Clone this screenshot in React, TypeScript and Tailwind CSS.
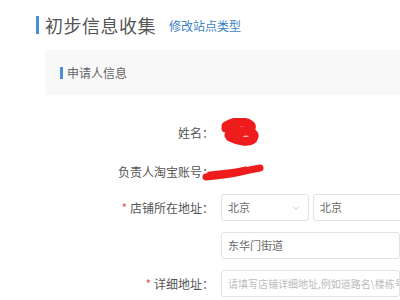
import React from "react";

const font = { fontFamily: '"Noto Sans CJK SC", "Noto Sans", sans-serif' };

function Chevron() {
  return (
    <svg width="8" height="6" viewBox="0 0 8 6" className="shrink-0">
      <path d="M1 1.5 L4 4.5 L7 1.5" fill="none" stroke="#c8c8c8" strokeWidth="1" />
    </svg>
  );
}

export default function App() {
  return (
    <div
      className="w-[400px] h-[300px] bg-white overflow-hidden relative"
      style={font}
    >
      {/* header */}
      <div className="flex items-center pl-[36px] pt-[15px] h-[35px]">
        <div className="w-[3px] h-[18px] bg-[#4a8fd6]" />
        <div className="ml-[6px] text-[18px] leading-[20px] text-[#555] tracking-[0.5px]">初步信息收集</div>
        <div className="ml-[13px] text-[12px] leading-[14px] text-[#3b7fc4] mt-[1px]">修改站点类型</div>
      </div>

      {/* section panel */}
      <div className="mt-[15px] ml-[45px] h-[45px] bg-[#f8f8f8] flex items-center pl-[15px]">
        <div className="w-[3px] h-[12px] bg-[#4a8fd6]" />
        <div className="ml-[4px] text-[12px] leading-[14px] text-[#666]">申请人信息</div>
      </div>

      {/* form */}
      <div className="mt-[28px] flex flex-col text-[12px] text-[#555]">
        <div className="flex items-center h-[20px] relative">
          <div className="w-[214px] text-right shrink-0">姓名：</div>
          <svg
            className="absolute left-[216px] top-[-5px]"
            width="46"
            height="28"
            viewBox="0 0 46 28"
          >
            <path
              d="M10 8 C16 4 24 3 31 5 C38 8 36 12 28 13 C36 13 40 16 37 21 C32 25 22 23 14 19"
              fill="none"
              stroke="#ee1c1c"
              strokeWidth="9"
              strokeLinecap="round"
              strokeLinejoin="round"
            />
            <path d="M9 11 C15 9 22 10 28 14 C24 17 18 18 12 17" fill="#ee1c1c" stroke="#ee1c1c" strokeWidth="7" strokeLinecap="round" strokeLinejoin="round" />
          </svg>
        </div>
        <div className="flex items-center h-[20px] mt-[19px] relative">
          <div className="w-[214px] text-right shrink-0">负责人淘宝账号：</div>
          <svg
            className="absolute left-[200px] top-[0px]"
            width="66"
            height="20"
            viewBox="0 0 66 20"
          >
            <path
              d="M6 15 C16 14 26 13 36 11 C46 9 53 7 60 6"
              fill="none"
              stroke="#ee1c1c"
              strokeWidth="7"
              strokeLinecap="round"
            />
            <path d="M10 13 C22 12 34 11 46 8" fill="none" stroke="#ee1c1c" strokeWidth="7" strokeLinecap="round" />
          </svg>
        </div>
        <div className="flex items-center h-[27px] mt-[12px]">
          <div className="w-[214px] text-right shrink-0">
            <span className="text-[#e05a5a] mr-[3px]">*</span>店铺所在地址：
          </div>
          <div className="ml-[7px] flex gap-[4px]">
            <div className="w-[88px] h-[27px] border border-[#e2e2e2] rounded-[3px] flex items-center justify-between pl-[6px] pr-[8px] text-[#666] text-[11px]">
              <span>北京</span>
              <Chevron />
            </div>
            <div className="w-[100px] h-[27px] border border-[#e2e2e2] rounded-[3px] flex items-center pl-[6px] text-[#666] text-[11px]">
              北京
            </div>
          </div>
        </div>
        <div className="flex items-center h-[27px] mt-[11px]">
          <div className="w-[214px] shrink-0" />
          <div className="ml-[7px] w-[200px] h-[27px] border border-[#e2e2e2] rounded-[3px] flex items-center pl-[6px] text-[#666] text-[11px]">
            东华门街道
          </div>
        </div>
        <div className="flex items-center h-[27px] mt-[11px]">
          <div className="w-[214px] text-right shrink-0">
            <span className="text-[#e05a5a] mr-[3px]">*</span>详细地址：
          </div>
          <div className="ml-[7px] w-[200px] h-[27px] border border-[#e2e2e2] rounded-[3px] flex items-center pl-[6px] text-[#bbb] text-[10px] whitespace-nowrap overflow-hidden">
            请填写店铺详细地址,例如道路名\楼栋号
          </div>
        </div>
      </div>
    </div>
  );
}
